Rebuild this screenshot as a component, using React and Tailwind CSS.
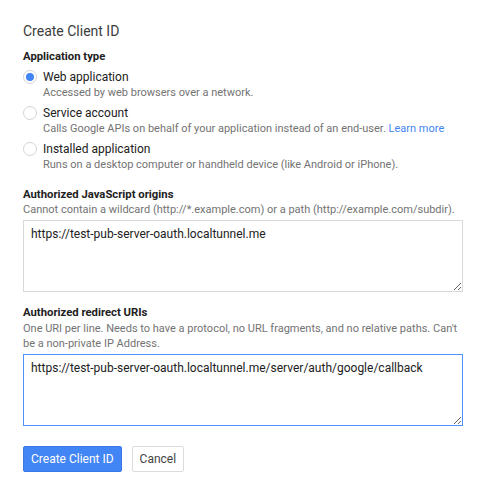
import React from "react";

function Radio({ checked, label, desc }) {
  return (
    <div className="flex items-start">
      <div className="w-[20px] h-[16px] flex items-center">
        <span className="w-[14px] h-[14px] rounded-full border border-[#d5d5d5] bg-white flex items-center justify-center">
          {checked && <span className="w-[8px] h-[8px] rounded-full bg-[#4285f4]" />}
        </span>
      </div>
      <div className="flex flex-col">
        <div className="text-[12px] leading-[16px] text-[#212121]">{label}</div>
        <div className="text-[11px] leading-[15px] text-[#737373]">{desc}</div>
      </div>
    </div>
  );
}

const ff = { fontFamily: "Roboto, 'Liberation Sans', sans-serif" };

export default function App() {
  return (
    <div className="w-[487px] h-[496px] bg-white pl-[23px] pt-[21px]" style={ff}>
      <div className="text-[14px] leading-[20px] text-[#3c3c3c]">Create Client ID</div>
      <div className="mt-[8px] text-[11.3px] leading-[16px] font-bold text-[#212121]">Application type</div>
      <div className="mt-[4px] flex flex-col gap-[5px]">
        <Radio checked label="Web application" desc="Accessed by web browsers over a network." />
        <Radio
          label="Service account"
          desc={
            <>
              Calls Google APIs on behalf of your application instead of an end-user.{" "}
              <span className="text-[#4285f4]">Learn more</span>
            </>
          }
        />
        <Radio
          label="Installed application"
          desc="Runs on a desktop computer or handheld device (like Android or iPhone)."
        />
      </div>

      <div className="mt-[15px] text-[11.3px] leading-[16px] font-bold text-[#212121]">
        Authorized JavaScript origins
      </div>
      <div className="text-[11px] leading-[13px] text-[#737373]">
        Cannot contain a wildcard (http://*.example.com) or a path (http://example.com/subdir).
      </div>
      <textarea
        readOnly
        wrap="off"
        defaultValue="https://test-pub-server-oauth.localtunnel.me"
        className="mt-[4px] block w-[440px] h-[72px] border border-[#d9d9d9] px-[7px] py-[5px] text-[12px] leading-[16px] text-[#212121] outline-none"
        style={ff}
      />

      <div className="mt-[13px] text-[11.3px] leading-[16px] font-bold text-[#212121]">
        Authorized redirect URIs
      </div>
      <div className="w-[440px] text-[11px] leading-[15px] text-[#737373]">
        One URI per line. Needs to have a protocol, no URL fragments, and no relative paths. Can't be a
        non-private IP Address.
      </div>
      <textarea
        readOnly
        wrap="off"
        defaultValue="https://test-pub-server-oauth.localtunnel.me/server/auth/google/callback"
        className="mt-[3px] block w-[440px] h-[72px] border border-[#4d90fe] px-[7px] py-[5px] text-[12px] leading-[16px] text-[#212121] outline-none"
        style={ff}
      />

      <div className="mt-[20px] flex gap-[10px]">
        <button className="h-[26px] px-[7px] rounded-[2px] bg-[#4285f4] border border-[#3b78e7] text-white text-[12px]">
          Create Client ID
        </button>
        <button className="h-[26px] px-[7px] rounded-[2px] bg-white border border-[#dcdcdc] text-[#444] text-[12px]">
          Cancel
        </button>
      </div>
    </div>
  );
}
